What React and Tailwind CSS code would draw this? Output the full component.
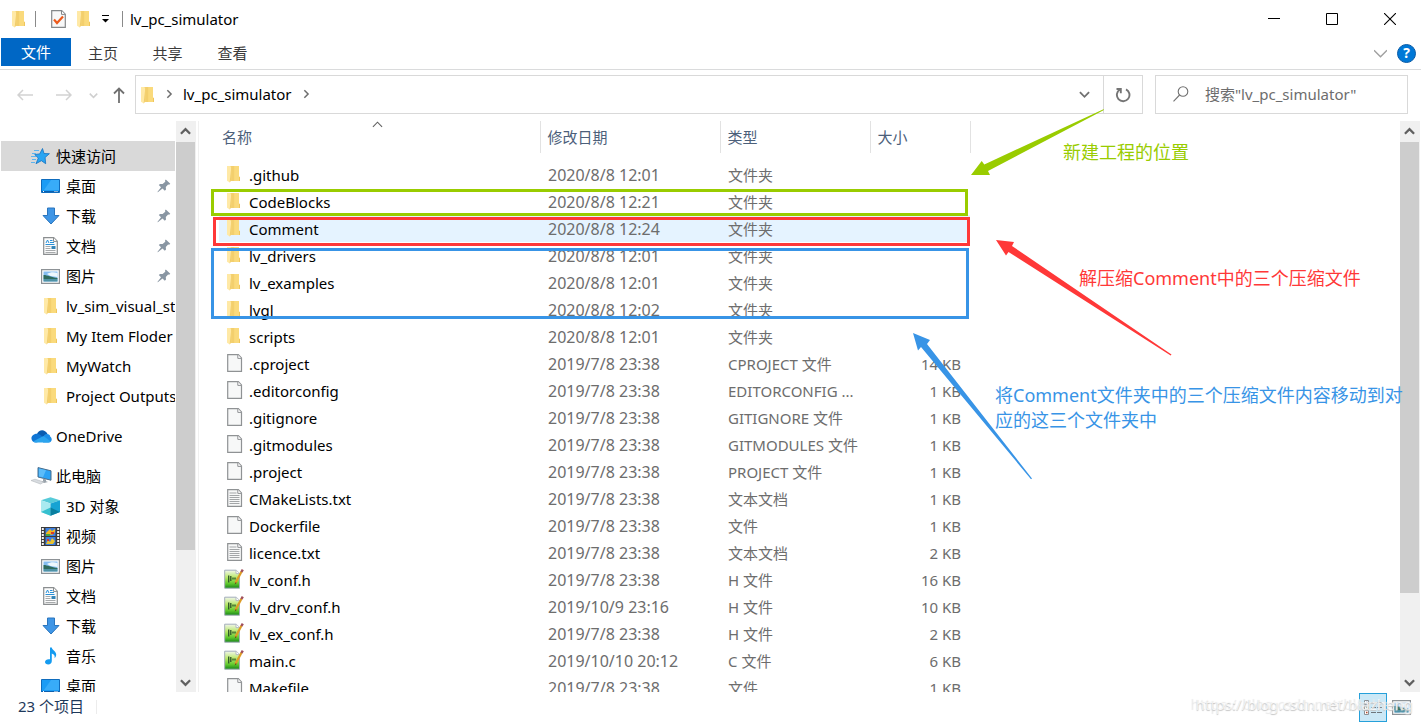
import React from 'react';

const FolderIcon = () => (
  <svg width="13" height="18" viewBox="0 0 13 18" className="shrink-0">
    <path d="M3 1h9v10.5l1 .8V16H3z" fill="#f9d978" />
    <path d="M12 11.5l1 .8V16h-1z" fill="#efc55c" />
    <path d="M7 1h5v15H7z" fill="#fada7c" />
    <path d="M0 1h3.2l1 1.6V15l-1.4 2.6L0 15.8z" fill="#ffe9a6" />
    <path d="M4.2 3v12l-1.4 2.6V16z" fill="#f1cd6b" />
    <path d="M4.2 1h3v15h-3z" fill="#f3cf6d" />
  </svg>
);

const FileIcon = ({ lined }) => (
  <svg width="16" height="18" viewBox="0 0 16 18" className="shrink-0">
    <path d="M.7.7h10.6l3.2 3.4v13.2H.7z" fill="#f7f8f8" stroke="#8f9294" strokeWidth="1.2" />
    <path d="M10.8.8v3.6h3.6" fill="#fff" stroke="#8f9294" />
    {lined && (
      <path d="M2.5 4h7M2.5 6.5h10M2.5 8.5h10M2.5 10.5h10M2.5 12.5h10M2.5 14.5h10" stroke="#a3a6a8" />
    )}
  </svg>
);

const CodeIcon = () => (
  <svg width="20" height="20" viewBox="0 0 20 20" className="shrink-0">
    <defs>
      <linearGradient id="codeGreen" x1="0" y1="0" x2="0" y2="1">
        <stop offset="0" stopColor="#f2f6ec" />
        <stop offset=".4" stopColor="#b9e86a" />
        <stop offset=".75" stopColor="#5cc72b" />
        <stop offset="1" stopColor="#17841a" />
      </linearGradient>
    </defs>
    <path d="M.7 1.2h11.6l3.2 3.2v14.8H.7z" fill="url(#codeGreen)" stroke="#a3adb8" />
    <path d="M12 1.2v3.4h3.4" fill="#fff" stroke="#b3bac2" />
    <path d="M4.7 6.5v7M6.8 7v5M9 8.5v2M11 8.5v2" stroke="#2c5429" strokeWidth="1.3" />
    <path d="M17.6 2.4L11.4 14" stroke="#dd9c26" strokeWidth="2.2" />
    <path d="M18.8.6l-1.4 2.4" stroke="#a04f5c" strokeWidth="2.4" />
    <path d="M11.8 13l-1.2 2.8 2-1.8z" fill="#4b3a20" />
  </svg>
);

const StarIcon = () => (
  <svg width="19" height="17" viewBox="0 0 19 17" className="shrink-0">
    <path d="M11.5.5l1.5 5 5.4.2-4.300 3.800.6 6.200-4.300-3-5.400 3 2.300-5.600-3.600-3.600 5-.6z" fill="#2aa5f2" stroke="#1572c0" strokeWidth=".8" />
    <path d="M3 2.500h5M1 5.500h4M0 8.500h5M1 11.500h4M0 14.500h4" stroke="#5cb4ef" />
  </svg>
);

const DesktopIcon = () => (
  <svg width="19" height="14" viewBox="0 0 19 14" className="shrink-0">
    <path d="M.5.5h18v13H.5z" fill="#1b9cf5" stroke="#0f6cbd" />
    <path d="M10 1h8v10H3z" fill="#38acf9" />
    <path d="M1 12.5h17" stroke="#0b5fae" />
    <path d="M13.5 12.5h1M15.5 12.5h1M2 12.5h1" stroke="#fff" />
  </svg>
);

const DownloadIcon = () => (
  <svg width="18" height="18" viewBox="0 0 18 18" className="shrink-0">
    <path d="M5.5 1h7v7.5H17L9 17 1 8.5h4.5z" fill="#3f96e6" stroke="#2a75bd" />
  </svg>
);

const DocumentIcon = () => (
  <svg width="15" height="18" viewBox="0 0 15 18" className="shrink-0">
    <path d="M.7.7h10l3.6 3.6v13H.7z" fill="#fcfcfc" stroke="#8b8e90" strokeWidth="1.2" />
    <path d="M10.5.8v3.6h3.6" fill="#fff" stroke="#8b8e90" />
    <path d="M3 6l1.500-3L6 6M7 3.500h2.500M7 5.500h4M2.500 7.500h9" fill="none" stroke="#2b91d9" />
    <path d="M2.500 9.500h5M2.500 11.500h5M2.500 13.500h10M2.500 15.500h10" stroke="#a7aaac" />
    <path d="M8.500 9h4v3h-4z" fill="#3585b8" />
  </svg>
);

const PictureIcon = () => (
  <svg width="19" height="15" viewBox="0 0 19 15" className="shrink-0">
    <path d="M.6.6h17.8v13.8H.6z" fill="#fff" stroke="#8d9296" strokeWidth="1.2" />
    <path d="M2.5 2.5h14v10h-14z" fill="#85bdf0" />
    <path d="M6 5c3-2 7-2 10.500-1v4l-7-1z" fill="#eef7fd" />
    <path d="M2.500 6c4 0 8 2.500 14 3v1h-14z" fill="#2f6b5d" />
    <path d="M2.500 10h14v2.500h-14z" fill="#4f92a5" />
  </svg>
);

const VideoIcon = () => (
  <svg width="19" height="19" viewBox="0 0 19 19" className="shrink-0">
    <path d="M0 0h19v19H0z" fill="#3a3a3a" />
    <path d="M1.800 1v17M17.200 1v17" stroke="#f4f4f4" strokeWidth="2" strokeDasharray="2 1" />
    <path d="M4.500 1h10v8h-10zM4.500 10h10v8h-10z" fill="#3d7fe0" />
    <path d="M5 6l4-4 2 2 3-2v3l-3 3-3-1-3 1z" fill="#f1b521" />
    <path d="M5 17l2-4 2 2 2-4 3 3-2 3z" fill="#e8c230" />
    <path d="M10 5h3v2h-3zM6 12h2v2H6z" fill="#d93b29" />
    <path d="M5 7h4v2H5z" fill="#47a83f" />
  </svg>
);

const MusicIcon = () => (
  <svg width="12" height="18" viewBox="0 0 12 18" className="shrink-0">
    <path d="M5 .5h1.800c.3 2.500 4.400 3.800 4.400 7 0 1.800-.8 3-1.600 3.800.5-2.800-.6-4-2.800-4.700V14c0 2.200-1.600 3.500-3.500 3.500S0 16.500 0 15c0-2 2.400-3.300 5-2.700z" fill="#159bf0" />
  </svg>
);

const CloudIcon = () => (
  <svg width="21" height="14" viewBox="0 0 21 14" className="shrink-0">
    <path d="M6 5C7.500.8 13.500-.8 16.500 5l-4 5z" fill="#0a5cb0" />
    <path d="M5 13.500c-5 0-6.500-6.500-1.500-8.300C6 4.200 8 5 9.500 6l6 5z" fill="#0f75d4" />
    <path d="M13 6.500c2-2.500 6-1.800 6.300 1.200 2.500 1.500 1.600 5.800-1.500 5.800H12z" fill="#1b8de6" />
    <path d="M2 12.500L12.500 7l7 5.300c-.6.800-1.400 1.200-2.400 1.200H5c-1 0-2-.3-3-1z" fill="#2ba4ee" />
  </svg>
);

const ComputerIcon = () => (
  <svg width="21" height="18" viewBox="0 0 21 18" className="shrink-0">
    <path d="M7 .6l13 3.200v9.400L7 10z" fill="#2ca2f4" stroke="#4a6c8a" />
    <path d="M8 1.500l7 1.800-3 7L8 9.500z" fill="#5cbcf9" />
    <path d="M12 11.500l3 .8v2l2 .7-4 1-3-1.500 2-.6z" fill="#9aa3ab" />
    <path d="M0 13.500l4-1.300 9 2.800-3.500 2z" fill="#d8dce0" stroke="#b3b8bd" strokeWidth=".6" />
  </svg>
);

const CubeIcon = () => (
  <svg width="19" height="19" viewBox="0 0 19 19" className="shrink-0">
    <path d="M9.500.3L19 3.200 9.500 6.500 0 3.200z" fill="#57cbd9" />
    <path d="M0 3.200l9.500 3.300v12.200L0 15z" fill="#a9eaf0" />
    <path d="M19 3.200L9.500 6.500v12.200L19 15z" fill="#16a3d3" />
    <path d="M9.500 10.500L0 15l9.500 3.700z" fill="#36c0cf" />
    <path d="M9.500 10.500L19 15l-9.500 3.700z" fill="#0a7f9f" />
  </svg>
);

const PinIcon = () => (
  <svg width="14" height="14" viewBox="0 0 14 14" className="shrink-0">
    <path d="M8.800.5l4.500 4.300-1.200.9-1-.3-2.300 2.600.2 2.600-1.200 1.200-2.300-2.200L.8 13.300l-.4-.4L4 8.200 1.800 6l1.200-1.100 2.600.2 2.700-2.400-.3-1.200z" fill="#8996a3" />
  </svg>
);

const Chevron = ({ d, color = '#606060', size = 12, stroke = 2 }) => (
  <svg width={size} height={size} viewBox="0 0 12 12" fill="none" stroke={color} strokeWidth={stroke} className="shrink-0">
    <path d={d} />
  </svg>
);

const UP = 'M1 8.500l5-5 5 5';
const DOWN = 'M1 3.500l5 5 5-5';
const RIGHT = 'M4 1.500L8.500 6 4 10.500';

const quickAccess = [
  { label: '桌面', icon: DesktopIcon, pinned: true },
  { label: '下载', icon: DownloadIcon, pinned: true },
  { label: '文档', icon: DocumentIcon, pinned: true },
  { label: '图片', icon: PictureIcon, pinned: true },
  { label: 'lv_sim_visual_st', icon: FolderIcon },
  { label: 'My Item Floder', icon: FolderIcon },
  { label: 'MyWatch', icon: FolderIcon },
  { label: 'Project Outputs', icon: FolderIcon },
];

const thisPc = [
  { label: '3D 对象', icon: CubeIcon },
  { label: '视频', icon: VideoIcon },
  { label: '图片', icon: PictureIcon },
  { label: '文档', icon: DocumentIcon },
  { label: '下载', icon: DownloadIcon },
  { label: '音乐', icon: MusicIcon },
  { label: '桌面', icon: DesktopIcon },
];

const files = [
  ['.github', '2020/8/8 12:01', '文件夹', '', 'folder'],
  ['CodeBlocks', '2020/8/8 12:21', '文件夹', '', 'folder'],
  ['Comment', '2020/8/8 12:24', '文件夹', '', 'folder'],
  ['lv_drivers', '2020/8/8 12:01', '文件夹', '', 'folder'],
  ['lv_examples', '2020/8/8 12:01', '文件夹', '', 'folder'],
  ['lvgl', '2020/8/8 12:02', '文件夹', '', 'folder'],
  ['scripts', '2020/8/8 12:01', '文件夹', '', 'folder'],
  ['.cproject', '2019/7/8 23:38', 'CPROJECT 文件', '14 KB', 'file'],
  ['.editorconfig', '2019/7/8 23:38', 'EDITORCONFIG ...', '1 KB', 'file'],
  ['.gitignore', '2019/7/8 23:38', 'GITIGNORE 文件', '1 KB', 'file'],
  ['.gitmodules', '2019/7/8 23:38', 'GITMODULES 文件', '1 KB', 'file'],
  ['.project', '2019/7/8 23:38', 'PROJECT 文件', '1 KB', 'file'],
  ['CMakeLists.txt', '2019/7/8 23:38', '文本文档', '1 KB', 'text'],
  ['Dockerfile', '2019/7/8 23:38', '文件', '1 KB', 'file'],
  ['licence.txt', '2019/7/8 23:38', '文本文档', '2 KB', 'text'],
  ['lv_conf.h', '2019/7/8 23:38', 'H 文件', '16 KB', 'code'],
  ['lv_drv_conf.h', '2019/10/9 23:16', 'H 文件', '10 KB', 'code'],
  ['lv_ex_conf.h', '2019/7/8 23:38', 'H 文件', '2 KB', 'code'],
  ['main.c', '2019/10/10 20:12', 'C 文件', '6 KB', 'code'],
  ['Makefile', '2019/7/8 23:38', '文件', '1 KB', 'file'],
];

const RowIcon = ({ kind }) => {
  if (kind === 'folder') return <FolderIcon />;
  if (kind === 'code') return <CodeIcon />;
  return <FileIcon lined={kind === 'text'} />;
};

const ScrollBar = ({ thumb }) => (
  <div className="w-5 shrink-0 flex flex-col bg-[#f0f0f0]">
    <button aria-label="向上滚动" className="h-5 shrink-0 flex items-center justify-center pr-px">
      <Chevron d={UP} size={11} stroke={2.5} />
    </button>
    <div className="flex-1 pt-px pr-px">
      <div className="bg-[#cdcdcd]" style={{ height: `${thumb}%` }} />
    </div>
    <button aria-label="向下滚动" className="h-5 shrink-0 flex items-center justify-center pr-px">
      <Chevron d={DOWN} size={11} stroke={2.5} />
    </button>
  </div>
);

const NavItem = ({ label, icon: Icon, pinned }) => (
  <a href="#" className="h-[30px] flex items-center pl-10 pr-1">
    <span className="w-[25px] flex shrink-0 justify-center pr-1.5">
      <Icon />
    </span>
    <span className="flex-1 whitespace-nowrap">{label}</span>
    {pinned && <PinIcon />}
  </a>
);

const NavRoot = ({ label, icon: Icon, active }) => (
  <a href="#" className={`h-[30px] flex items-center pl-[30px] ${active ? 'bg-[#d9d9d9]' : ''}`}>
    <span className="w-[25px] flex shrink-0">
      <Icon />
    </span>
    <span className="whitespace-nowrap">{label}</span>
  </a>
);

const TitleBar = () => (
  <header className="h-[38px] shrink-0 flex items-center pl-3 pr-0.5">
    <FolderIcon />
    <span className="w-px h-4 ml-2.5 bg-[#8a8a8a]" />
    <button aria-label="属性" className="ml-[15px]">
      <svg width="15" height="18" viewBox="0 0 15 18">
        <path d="M.7.7h10l3.600 3.600v13H.7z" fill="#f8f8f8" stroke="#85888a" strokeWidth="1.200" />
        <path d="M10.500.8v3.600h3.600" fill="#fff" stroke="#85888a" />
        <path d="M3 9.500l3 3.500 6-6.500" fill="none" stroke="#ec5a1c" strokeWidth="2.200" />
      </svg>
    </button>
    <button aria-label="新建文件夹" className="ml-[11px]">
      <FolderIcon />
    </button>
    <button aria-label="自定义" className="ml-3">
      <svg width="7" height="8" viewBox="0 0 7 8">
        <path d="M0 .5h7" stroke="#000" />
        <path d="M0 4h7L3.500 7.500z" />
      </svg>
    </button>
    <span className="w-px h-4 ml-[13px] bg-[#8a8a8a]" />
    <h1 className="ml-[7px] flex-1">lv_pc_simulator</h1>
    <button aria-label="最小化" className="w-[58px] h-full flex items-center justify-center">
      <svg width="12" height="12" viewBox="0 0 12 12"><path d="M0 5.500h12" stroke="#000" /></svg>
    </button>
    <button aria-label="最大化" className="w-[58px] h-full flex items-center justify-center">
      <svg width="12" height="12" viewBox="0 0 12 12"><path d="M.5.5h11v11H.5z" fill="none" stroke="#000" /></svg>
    </button>
    <button aria-label="关闭" className="w-[58px] h-full flex items-center justify-center">
      <svg width="12" height="12" viewBox="0 0 12 12"><path d="M0 0l12 12M12 0L0 12" stroke="#000" strokeWidth="1.100" /></svg>
    </button>
  </header>
);

const Ribbon = () => (
  <div className="h-8 shrink-0 flex items-start pl-px pr-[5px] border-b border-[#dadbdc] text-[#3b3b3b]">
    <button className="w-[70px] h-7 bg-[#0067c5] text-white">文件</button>
    <button className="w-16 h-[30px]">主页</button>
    <button className="w-[65px] h-[30px]">共享</button>
    <button className="w-[65px] h-[30px]">查看</button>
    <div className="ml-auto h-[30px] flex items-center gap-2.5">
      <button aria-label="展开功能区">
        <Chevron d="M0 3l6 6 6-6" color="#a0a0a0" size={13} stroke={1.300} />
      </button>
      <button aria-label="帮助" className="w-[19px] h-[19px] rounded-full bg-[#0078d7] border border-[#0a5ba6] text-white text-sm leading-4 font-bold">
        ?
      </button>
    </div>
  </div>
);

const AddressBar = () => (
  <div className="h-[51px] shrink-0 flex items-start pt-[5px] pr-[13px]">
    <div className="w-[135px] h-10 shrink-0 flex items-center pl-[17px]">
      <button aria-label="后退">
        <svg width="16" height="12" viewBox="0 0 16 12" fill="none" stroke="#d2d2d2" strokeWidth="1.500"><path d="M16 6H1M6 1L1 6l5 5" /></svg>
      </button>
      <button aria-label="前进" className="ml-[23px]">
        <svg width="16" height="12" viewBox="0 0 16 12" fill="none" stroke="#d2d2d2" strokeWidth="1.500"><path d="M0 6h15M10 1l5 5-5 5" /></svg>
      </button>
      <button aria-label="最近的位置" className="ml-[17px]">
        <Chevron d={DOWN} color="#cfcfcf" size={9} stroke={2} />
      </button>
      <button aria-label="上移" className="ml-[15px]">
        <svg width="12" height="16" viewBox="0 0 12 16" fill="none" stroke="#707070" strokeWidth="1.800"><path d="M6 16V1.500M1 6.500l5-5 5 5" /></svg>
      </button>
    </div>
    <div className="flex-1 h-[39px] flex items-center border border-[#d9d9d9] pl-[5px]">
      <FolderIcon />
      <span className="ml-2.5 pb-0.5 flex items-center gap-[9px]">
        <Chevron d={RIGHT} size={10} stroke={1.800} color="#6d6d6d" />
        <a href="#">lv_pc_simulator</a>
        <Chevron d={RIGHT} size={10} stroke={1.800} color="#6d6d6d" />
      </span>
      <button aria-label="历史记录" className="ml-auto w-[37px] h-full flex items-center justify-center">
        <Chevron d={DOWN} size={11} color="#707070" />
      </button>
      <button aria-label="刷新" className="w-[39px] h-full flex items-center justify-center border-l border-[#d9d9d9]">
        <svg width="16" height="16" viewBox="0 0 16 16" fill="none" stroke="#757575" strokeWidth="1.900">
          <path d="M11 2.300a6.300 6.300 0 1 1-6 .2" />
          <path d="M1.500 2h4.300v4.200" />
        </svg>
      </button>
    </div>
    <label className="w-[253px] h-[39px] ml-3 shrink-0 flex items-center border border-[#d9d9d9] pl-[17px] pb-0.5">
      <svg width="16" height="16" viewBox="0 0 16 16" fill="none" stroke="#707070" strokeWidth="1.100" className="shrink-0">
        <circle cx="10" cy="5.500" r="4.800" />
        <path d="M6.600 9L.5 15.300" />
      </svg>
      <input
        type="text"
        aria-label="搜索"
        placeholder={'搜索"lv_pc_simulator"'}
        className="ml-4 w-48 bg-transparent outline-none placeholder:text-[#6d6d6d]"
      />
    </label>
  </div>
);

const FileTable = () => (
  <table className="w-[751px] table-fixed border-collapse ml-5 shrink-0 self-start text-[#6d6d6d]">
    <colgroup>
      <col className="w-[321px]" />
      <col className="w-[180px]" />
      <col className="w-[150px]" />
      <col className="w-[100px]" />
    </colgroup>
    <thead>
      <tr className="h-8 text-left text-[#4c607a]">
        <th className="relative font-normal p-0 pl-[3px] border-r border-[#e2e2e2]">
          名称
          <span className="absolute -top-0.5 left-[153px]">
            <Chevron d={UP} size={11} stroke={1.200} />
          </span>
        </th>
        <th className="font-normal p-0 pl-[7px] border-r border-[#e2e2e2]">修改日期</th>
        <th className="font-normal p-0 pl-[7px] border-r border-[#e2e2e2]">类型</th>
        <th className="font-normal p-0 pl-[7px] border-r border-[#e2e2e2]">大小</th>
      </tr>
      <tr className="h-2" />
    </thead>
    <tbody>
      {files.map(([name, date, type, size, kind]) => (
        <tr key={name} className={`h-[27px] ${name === 'Comment' ? 'bg-[#e5f3ff]' : ''}`}>
          <td className="p-0">
            <div className="h-[27px] flex items-center">
              <span className={`w-[30px] flex pb-0.5 ${kind === 'code' ? 'pl-[5px]' : 'pl-2'}`}>
                <RowIcon kind={kind} />
              </span>
              <span className="text-black">{name}</span>
            </div>
          </td>
          <td className="p-0 pl-2 text-base leading-5">{date}</td>
          <td className="p-0 pl-2 whitespace-nowrap">{type}</td>
          <td className="p-0 pr-[9px] text-right">{size}</td>
        </tr>
      ))}
    </tbody>
  </table>
);

// Boxes, arrows and notes drawn on top of the window
const Annotations = () => (
  <div className="absolute inset-0 pointer-events-none text-lg leading-[25px]">
    <div className="absolute left-[211px] top-[189px] w-[757px] h-[27px] border-3 border-[#99cc00]" />
    <div className="absolute left-[213px] top-[217px] w-[757px] h-[29px] border-3 border-[#ff3838]" />
    <div className="absolute left-[211px] top-[248px] w-[758px] h-[71px] border-3 border-[#3894e6]" />
    <svg width="1421" height="722" viewBox="0 0 1421 722" className="absolute left-0 top-0">
      <path d="M971 175l10.700-14 2.600 3.500L1104 109l-.5 1.200L988 171l2 4z" fill="#99cc00" />
      <path d="M996 240l18 2-2 4 159.500 108.500-.8 1L1008.500 252l-2.500 3.500z" fill="#ff3838" />
      <path d="M913 333l17 7-3 4 105 134.500-1 .7L921 347l-3 3.500z" fill="#3894e6" />
    </svg>
    <p className="absolute left-[1063px] top-[140px] whitespace-nowrap text-[#99cc00]">新建工程的位置</p>
    <p className="absolute left-[1079px] top-[266px] whitespace-nowrap text-[#ff3838]">解压缩Comment中的三个压缩文件</p>
    <p className="absolute left-[995px] top-[383px] whitespace-nowrap text-[#3894e6]">
      将Comment文件夹中的三个压缩文件内容移动到对
      <br />
      应的这三个文件夹中
    </p>
  </div>
);

const StatusBar = () => (
  <footer className="relative h-[30px] shrink-0 flex items-center pl-[18px] pr-[9px] text-[#1e395b]">
    <span className="h-full leading-7">23 个项目</span>
    <span className="w-px h-3.5 ml-3 bg-[#ececec]" />
    <button aria-label="详细信息" className="ml-auto w-7 h-[29px] flex items-center justify-center border border-[#26a0da] bg-[#cbe8f6]">
      <svg width="18" height="15" viewBox="0 0 18 15">
        <path d="M.5.5h4v4h-4zM.5 5.500h4v4h-4zM.5 10.500h4v4h-4z" fill="#fff" stroke="#8b9196" />
        <path d="M2 2.500h1.500" stroke="#3a6fb0" strokeWidth="1.500" />
        <path d="M2 7.500h1.500" stroke="#5f8c2f" strokeWidth="1.500" />
        <path d="M2 12.500h1.500" stroke="#b54a28" strokeWidth="1.500" />
        <path d="M7 2.500h5M13 2.500h5M7 7.500h5M13 7.500h5M7 12.500h5M13 12.500h5" stroke="#6e767c" />
      </svg>
    </button>
    <button aria-label="大缩略图" className="ml-1 w-[21px] flex justify-center">
      <PictureIcon />
    </button>
    <span className="absolute right-2 top-0 h-6 leading-6 text-white/70 [text-shadow:0_1px_1px_#c4c4c4,-5px_0_1px_#e8e8e8]">
      https://blog.csdn.net/blazheng
    </span>
  </footer>
);

const App = () => {
  return (
    <div className="relative h-screen flex flex-col overflow-hidden bg-white text-black text-[15px] leading-5 font-['Noto_Sans','Noto_Sans_CJK_SC',sans-serif]">
      <TitleBar />
      <Ribbon />
      <AddressBar />
      <main className="flex-1 min-h-0 flex overflow-hidden">
        <aside className="w-[199px] shrink-0 flex border-r border-[#f0f0f0]">
          <nav className="flex-1 min-w-0 ml-px mr-px pt-5 overflow-hidden">
            <NavRoot label="快速访问" icon={StarIcon} active />
            {quickAccess.map((item) => (
              <NavItem key={item.label} {...item} />
            ))}
            <div className="my-2.5">
              <NavRoot label="OneDrive" icon={CloudIcon} />
            </div>
            <NavRoot label="此电脑" icon={ComputerIcon} />
            {thisPc.map((item) => (
              <NavItem key={item.label} {...item} />
            ))}
          </nav>
          <div className="flex pr-0.5">
            <ScrollBar thumb={77} />
          </div>
        </aside>
        <section className="flex-1 min-w-0 flex overflow-hidden">
          <FileTable />
          <div className="ml-auto flex pr-px">
            <ScrollBar thumb={85} />
          </div>
        </section>
      </main>
      <StatusBar />
      <Annotations />
    </div>
  );
};

export default App;
